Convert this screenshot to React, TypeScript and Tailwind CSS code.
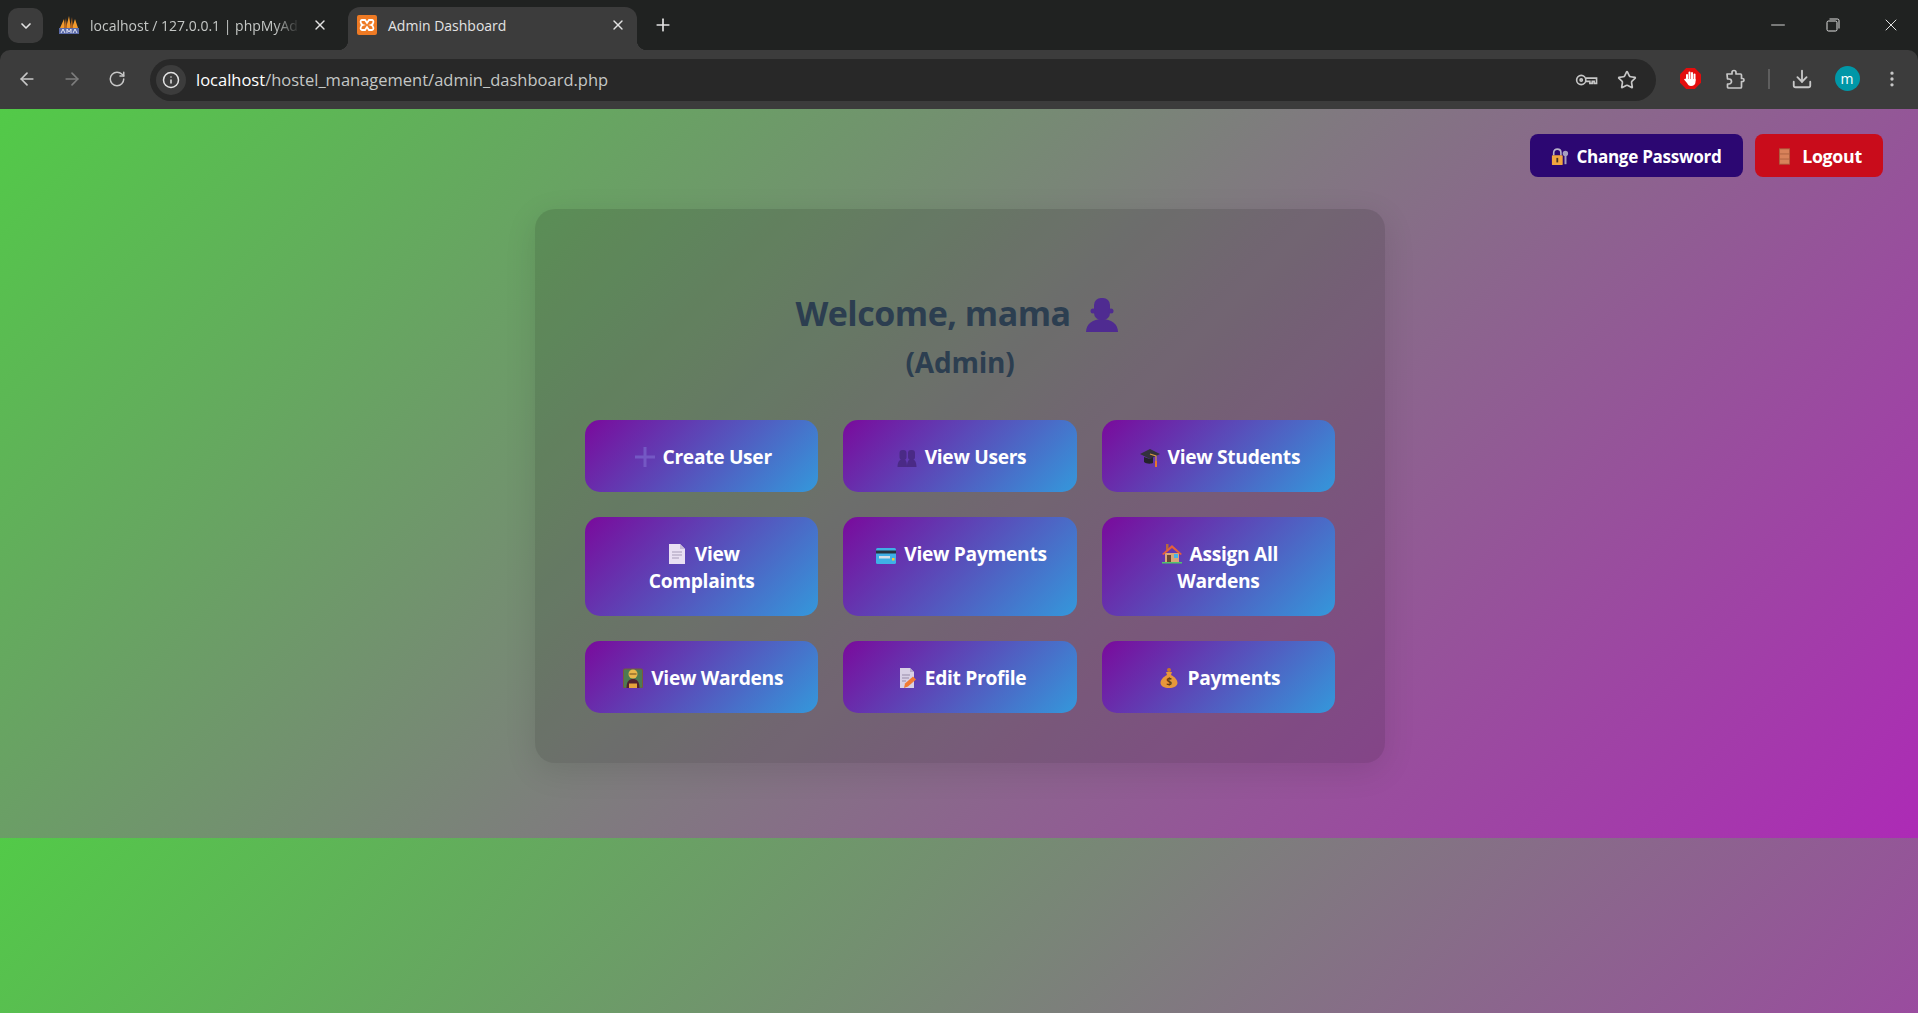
import type { ReactNode } from "react";
import { ArrowLeft, ArrowRight, ChevronDown, Download, Info, Minus, MoreVertical, Plus, RotateCw, Star, X } from "lucide-react";

const Emoji = ({ children, className = "w-5 h-5 ml-[3px] mr-[8px]" }: { children: ReactNode; className?: string }) => (
  <svg viewBox="0 0 20 20" className={`inline-block align-[-3px] ${className}`}>
    {children}
  </svg>
);

const PlusEmoji = () => (
  <Emoji>
    <path d="M8.500 0h3v8.500H20v3h-8.500V20h-3v-8.500H0v-3h8.500z" fill="#7458c4" />
  </Emoji>
);

const BustsEmoji = () => (
  <Emoji>
    <g fill="#4a2a86">
      <rect x="2.500" y="3" width="7" height="10" rx="3" />
      <rect x="11" y="3" width="7" height="10" rx="3" />
      <path d="M0.500 20c0-6 3-8 5.500-8s4 2 4 8zM10 20c0-6 2-8 4.500-8s5 2 5 8z" />
    </g>
  </Emoji>
);

const CapEmoji = () => (
  <Emoji>
    <path d="M0 7l10-5 10 5-10 5z" fill="#33323c" />
    <path d="M4 10v5c2 2 7 2 9 1v-6l-3 2z" fill="#24232b" />
    <path d="M10 7l6 2v6" fill="none" stroke="#d99a45" strokeWidth="1.200" />
    <rect x="15" y="14" width="2" height="6" fill="#e8762c" />
  </Emoji>
);

const PageEmoji = () => (
  <Emoji>
    <path d="M2 0h11l5 5v15H2z" fill="#e9e0f3" />
    <path d="M13 0l5 5h-5z" fill="#c6b9d8" />
    <path d="M5 8h10M5 11h10M5 14h7" stroke="#a79cb8" strokeWidth="1" />
  </Emoji>
);

const CardEmoji = () => (
  <Emoji>
    <rect x="0" y="4" width="20" height="16" rx="1.500" fill="#3fb0e6" />
    <rect x="0" y="6.500" width="20" height="3" fill="#27323f" />
    <rect x="3" y="12" width="11" height="2.500" fill="#d5dfe8" />
    <rect x="16" y="14" width="2.500" height="2.500" fill="#f3c63c" />
  </Emoji>
);

const HouseEmoji = () => (
  <Emoji>
    <rect x="3" y="9" width="14" height="9" fill="#d9a679" />
    <rect x="4" y="0" width="2.500" height="6" fill="#b5683f" />
    <path d="M0 10L10 1l10 9-1.500 1L10 4l-8.500 7z" fill="#e5603a" />
    <rect x="5" y="11" width="4" height="7" fill="#6b4636" />
    <rect x="12" y="10" width="4" height="4" fill="#45b5e8" />
    <rect x="0" y="18" width="20" height="1.500" fill="#4fc46c" />
  </Emoji>
);

const WardenEmoji = () => (
  <Emoji>
    <rect x="0.500" y="1" width="19" height="19" rx="1" fill="#4d7a52" stroke="#7a5a3a" strokeWidth="1" />
    <circle cx="10" cy="6" r="4.500" fill="#e8b64a" />
    <path d="M6.500 6h7" stroke="#6b4b1c" strokeWidth="1" />
    <path d="M3.500 20c0-7 3-9 6.500-9s6.500 2 6.500 9z" fill="#51212e" />
    <rect x="6" y="15.500" width="8" height="4.500" fill="#e6a23c" />
  </Emoji>
);

const MemoEmoji = () => (
  <Emoji>
    <path d="M3 0h10l4 4v16H3z" fill="#d8d0e4" />
    <path d="M13 0l4 4h-4z" fill="#b5a9c8" />
    <path d="M5 7h8M5 10h7M5 13h4" stroke="#978ba8" strokeWidth="1" />
    <path d="M7 20l1-4.500 8-7 3 3-8 7z" fill="#f07a32" />
  </Emoji>
);

const BagEmoji = () => (
  <Emoji>
    <path d="M7 4h6l-1 3c4 2 6.500 5 6.500 8 0 3-4 5-8.500 5s-8.500-2-8.500-5c0-3 2.500-6 6.500-8z" fill="#e8973a" />
    <circle cx="10" cy="2" r="2" fill="#c9762a" />
    <text x="10" y="17" fontSize="10" fontWeight="700" textAnchor="middle" fill="#6b3d10">
      $
    </text>
  </Emoji>
);

const LockKeyEmoji = () => (
  <Emoji className="w-[18px] h-[18px] mr-[7px]">
    <path d="M3 8V5c0-5 8-5 8 0v3" fill="none" stroke="#b8b2c8" strokeWidth="1.800" />
    <rect x="1" y="8" width="12" height="11" rx="1" fill="#f2a63f" />
    <rect x="6" y="11" width="2" height="5" fill="#4a3420" />
    <circle cx="16" cy="6" r="3" fill="#a79fc0" />
    <rect x="15" y="8" width="2.200" height="10" fill="#a79fc0" />
  </Emoji>
);

const DoorEmoji = () => (
  <Emoji className="w-[17px] h-[17px] mr-[9px]">
    <rect x="4" y="1" width="12" height="18" fill="#d8825a" />
    <path d="M4 7h12M4 13h12" stroke="#a95f3e" strokeWidth="1" />
    <rect x="4" y="1" width="12" height="18" fill="none" stroke="#a95f3e" strokeWidth="1" />
  </Emoji>
);

const PmaFavicon = () => (
  <svg viewBox="0 0 22 20" className="w-[22px] h-5 shrink-0">
    <path d="M2 13L6 4l1 9zM8 13l3-12 2 12zM14 13l3-9 3 9z" fill="#f29a2e" />
    <path d="M6 13L8 3l1 10zM12 13l2-11 1 11z" fill="#b9661c" />
    <rect x="1" y="13" width="20" height="6" fill="#5a6aa8" />
    <path d="M3 18l2-4 2 4M9 18v-4l2 3 2-3v4M15 18l2-4 2 4" fill="none" stroke="#e3e6f5" strokeWidth="1" />
  </svg>
);

const XamppFavicon = () => (
  <svg viewBox="0 0 20 20" className="w-5 h-5 shrink-0">
    <rect width="20" height="20" rx="2" fill="#ee7a24" />
    <path d="M5 5h3l2 3 2-3h3c2 0 2 4-1 5 3 1 3 5 1 5h-3l-2-3-2 3H5c-2 0-2-4 1-5-3-1-3-5-1-5z" fill="none" stroke="#fff" strokeWidth="1.800" />
  </svg>
);

const KeyIcon = () => (
  <svg viewBox="0 0 24 14" className="w-[23px] h-[14px]" fill="none" stroke="#c7c7c7" strokeWidth="1.700">
    <circle cx="6.500" cy="7" r="4.800" />
    <circle cx="6.500" cy="7" r="1.200" />
    <path d="M11.300 5h11.200v5.500h-2.500V8.500h-2v2h-2.500V8.500h-4.200" />
  </svg>
);

const PuzzleIcon = () => (
  <svg viewBox="0 0 20 20" className="w-5 h-5" fill="none" stroke="#c7c7c7" strokeWidth="1.700" strokeLinejoin="round">
    <path d="M2 5h5V3.500a2 2 0 0 1 4 0V5h4.500a1 1 0 0 1 1 1v3.500h1a1.500 1.500 0 0 1 0 3h-1V18a1 1 0 0 1-1 1H3.500a1 1 0 0 1-1-1v-3h1.500a2.500 2.500 0 0 0 0-5H2.500z" />
  </svg>
);

const RestoreIcon = () => (
  <svg viewBox="0 0 14 14" className="w-[14px] h-[14px]" fill="none" stroke="#e2e2e2" strokeWidth="1">
    <rect x="1" y="3" width="10" height="10" rx="1.500" />
    <path d="M3.500 1h8a1.500 1.500 0 0 1 1.500 1.500v8" />
  </svg>
);

const StopHand = () => (
  <svg viewBox="0 0 21 21" className="w-[21px] h-[21px]">
    <path d="M6.200 0h8.600L21 6.200v8.600L14.800 21H6.200L0 14.800V6.200z" fill="#e30d0d" />
    <g fill="#ffffff">
      <rect x="6" y="6" width="2" height="8" rx="1" />
      <rect x="8.500" y="3.500" width="2" height="9" rx="1" />
      <rect x="11" y="4" width="2" height="9" rx="1" />
      <rect x="13.500" y="5.500" width="2" height="8" rx="1" />
      <path d="M6 11h9.500v3c0 2.500-2 4-4.500 4-2 0-3-1-4-3l-3-3.500 1.200-1z" />
    </g>
  </svg>
);

const actionRows = [
  { label: "Create User", icon: <PlusEmoji /> },
  { label: "View Users", icon: <BustsEmoji /> },
  { label: "View Students", icon: <CapEmoji /> },
  { label: "View Complaints", icon: <PageEmoji /> },
  { label: "View Payments", icon: <CardEmoji /> },
  { label: "Assign All Wardens", icon: <HouseEmoji /> },
  { label: "View Wardens", icon: <WardenEmoji /> },
  { label: "Edit Profile", icon: <MemoEmoji /> },
  { label: "Payments", icon: <BagEmoji /> },
];

const BrowserChrome = () => (
  <div className="bg-[#202221] text-[14px] text-[#e3e3e3]">
    <div className="h-[50px] flex pl-2 pt-[7px]">
      <div className="w-[35px] h-[35px] mt-px rounded-[10px] bg-[#3c3c3c] flex items-center justify-center">
        <ChevronDown size={16} strokeWidth={2.5} color="#e3e3e3" />
      </div>
      <div className="w-[305px] h-[43px] pb-[7px] flex items-center pl-[15px] text-[#c4c7c5]">
        <PmaFavicon />
        <span className="ml-[10px] w-[210px] overflow-hidden whitespace-nowrap [mask-image:linear-gradient(to_right,black_88%,transparent)]">
          localhost / 127.0.0.1 | phpMyAd
        </span>
        <X size={16} strokeWidth={2} color="#e3e3e3" className="ml-[12px]" />
      </div>
      <div className="relative w-[289px] h-[43px] pb-[7px] bg-[#3c3c3c] rounded-t-[12px] flex items-center pl-[9px]">
        <span className="absolute -left-[10px] bottom-0 w-[10px] h-[10px] bg-[radial-gradient(circle_at_0_0,transparent_10px,#3c3c3c_10.5px)]" />
        <span className="absolute -right-[10px] bottom-0 w-[10px] h-[10px] bg-[radial-gradient(circle_at_100%_0,transparent_10px,#3c3c3c_10.5px)]" />
        <XamppFavicon />
        <span className="ml-[11px] w-[222px] whitespace-nowrap">Admin Dashboard</span>
        <X size={16} strokeWidth={2} color="#e3e3e3" />
      </div>
      <div className="ml-[16px] h-[35px] flex items-center">
        <Plus size={20} strokeWidth={2} color="#e3e3e3" />
      </div>
      <div className="ml-auto h-[35px] flex items-center">
        <Minus size={22} strokeWidth={1} color="#e2e2e2" />
        <div className="ml-[37px]">
          <RestoreIcon />
        </div>
        <X size={20} strokeWidth={1.2} color="#e2e2e2" className="ml-[41px] mr-[17px]" />
      </div>
    </div>
    <div className="h-[59px] pb-[2px] bg-[#3c3c3c] rounded-t-[10px] flex items-center pl-[6px] pr-[6px]">
      <div className="w-[42px] flex justify-center">
        <ArrowLeft size={20} color="#c7c7c7" />
      </div>
      <div className="w-[42px] ml-[3px] flex justify-center">
        <ArrowRight size={20} color="#7d7d7d" />
      </div>
      <div className="w-[42px] ml-[3px] flex justify-center">
        <RotateCw size={18} color="#c7c7c7" />
      </div>
      <div className="ml-[12px] mt-[2px] flex-1 h-[42px] rounded-full bg-[#282828] flex items-center pl-[6px] pr-[19px]">
        <div className="w-[30px] h-[30px] rounded-full bg-[#3c3c3c] flex items-center justify-center">
          <Info size={18} color="#e3e3e3" />
        </div>
        <span className="ml-[10px] pt-[2px] text-[16.5px] text-[#c4c7c5] whitespace-nowrap">
          <span className="text-white">localhost</span>/hostel_management/admin_dashboard.php
        </span>
        <div className="ml-auto flex items-center gap-[19px]">
          <KeyIcon />
          <Star size={20} color="#c7c7c7" />
        </div>
      </div>
      <div className="ml-[14px] w-[40px] flex justify-center">
        <StopHand />
      </div>
      <div className="ml-[5px] w-[40px] flex justify-center">
        <PuzzleIcon />
      </div>
      <div className="ml-[13px] w-[2px] h-[20px] bg-[#5e5e5e]" />
      <div className="ml-[12px] w-[40px] flex justify-center">
        <Download size={22} color="#c7c7c7" />
      </div>
      <div className="ml-[5px] w-[40px] flex justify-center">
        <div className="w-[25px] h-[25px] rounded-full bg-[#0097a7] text-white text-[14px] flex items-center justify-center">m</div>
      </div>
      <div className="ml-[5px] w-[40px] flex justify-center">
        <MoreVertical size={20} color="#c7c7c7" />
      </div>
    </div>
  </div>
);

export default function App() {
  return (
    <div className="h-[1013px] overflow-hidden flex flex-col font-['Open_Sans','Liberation_Sans',sans-serif]">
      <BrowserChrome />
      <div className="flex-1 pl-[2px] bg-[linear-gradient(135deg,#52ca48,#ad2ab6)] bg-[length:100%_729px]">
        <div className="flex justify-end gap-3 pt-[25px] pr-[35px]">
          <div className="h-[43px] w-[213px] pt-[2px] rounded-lg bg-[#2c0772] text-white text-[17.1px] tracking-[-0.3px] font-bold flex items-center justify-center">
            <LockKeyEmoji />
            Change Password
          </div>
          <div className="h-[43px] w-[128px] pt-[2px] rounded-lg bg-[#c90c1b] text-white text-[17.8px] tracking-[-0.3px] font-bold flex items-center justify-center">
            <DoorEmoji />
            Logout
          </div>
        </div>
        <div className="mx-auto mt-[32px] w-[850px] p-[50px] rounded-[20px] bg-black/[0.13] shadow-[0_8px_32px_rgba(0,0,0,0.1)]">
          <h1 className="mt-[29px] mb-[33px] text-center font-bold leading-[50px] text-[#2c3e50]">
            <span className="block text-[34px] tracking-[-0.5px]">
              Welcome, mama
              <svg viewBox="0 0 34 34" className="inline-block w-[34px] h-[34px] ml-[14px] mr-[6px] align-[-6px]">
                <g fill="#4f2b91">
                  <rect x="9" y="0" width="16" height="22" rx="7" />
                  <circle cx="8" cy="13" r="2.500" />
                  <circle cx="26" cy="13" r="2.500" />
                  <path d="M1 34c0-8 7-13 16-13s16 5 16 13z" />
                </g>
              </svg>
            </span>
            <span className="block text-[28px] -mt-px tracking-[-0.2px]">(Admin)</span>
          </h1>
          <div className="grid grid-cols-3 gap-[25px]">
            {actionRows.map((action) => (
              <div
                key={action.label}
                className="px-[28px] pt-[23px] pb-[22px] rounded-[15px] bg-[linear-gradient(135deg,#7a0a9c,#3498db)] text-white text-center text-[19.2px] tracking-[-0.3px] font-bold leading-[27px]"
              >
                {action.icon}
                {action.label}
              </div>
            ))}
          </div>
        </div>
      </div>
    </div>
  );
}
